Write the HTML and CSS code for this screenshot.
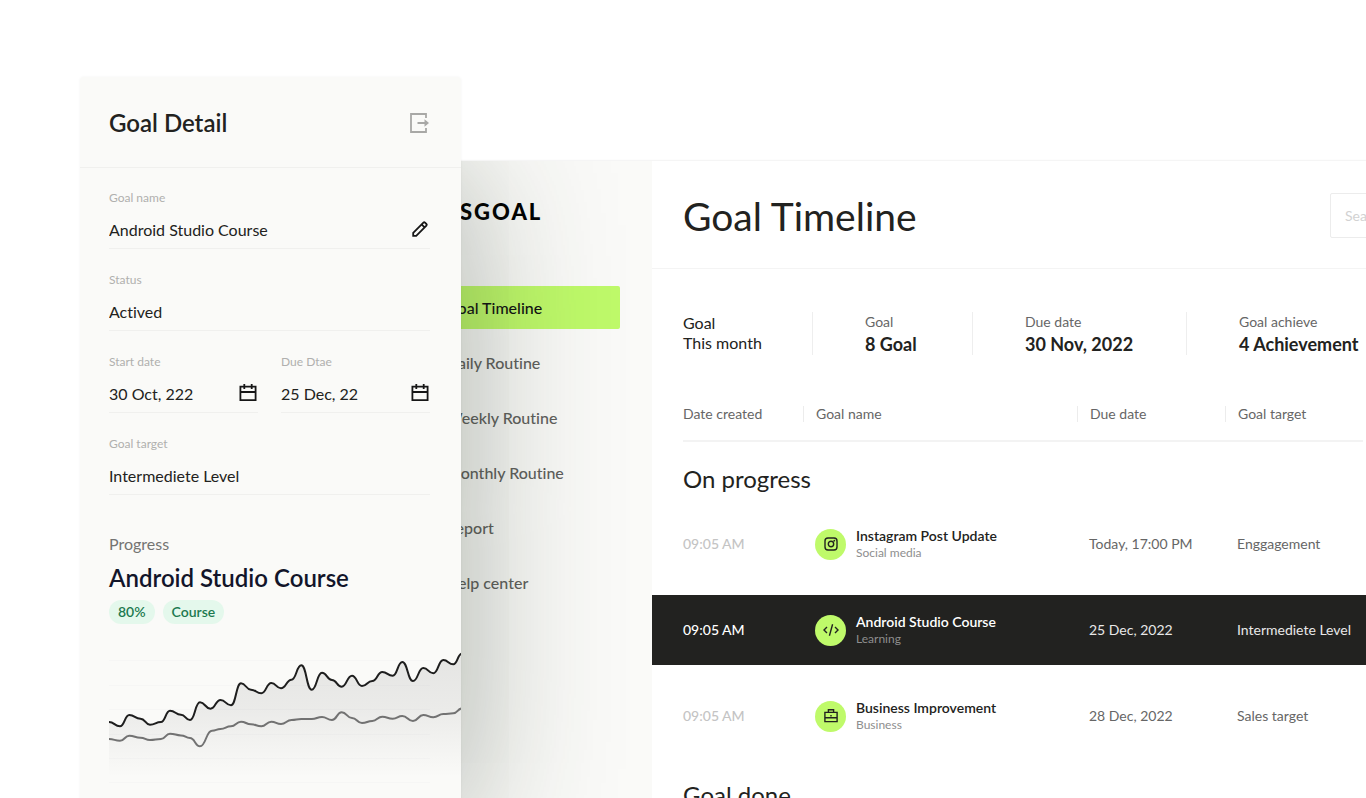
FILE: index.html
```html
<!DOCTYPE html>
<html lang="en">
<head>
<meta charset="utf-8">
<meta name="viewport" content="width=device-width, initial-scale=1">
<title>Goal Timeline</title>
<link rel="stylesheet" href="styles.css">
</head>
<body>
<div class="stage">
  <div class="app">
    <aside class="sidebar">
      <div class="logo">SGOAL</div>
      <nav class="nav">
        <a class="nav-link nav-link-active" href="#timeline">Goal Timeline</a>
        <a class="nav-link" href="#daily">Daily Routine</a>
        <a class="nav-link" href="#weekly">Weekly Routine</a>
        <a class="nav-link" href="#monthly">Monthly Routine</a>
        <a class="nav-link" href="#report">Report</a>
        <a class="nav-link" href="#help">Help center</a>
      </nav>
    </aside>
    <main class="main">
      <header class="main-head">
        <h1 class="page-title">Goal Timeline</h1>
        <input class="search" type="search" placeholder="Search" aria-label="Search">
      </header>
      <section class="stats">
        <p class="stat stat-lead">Goal<br>This month</p>
        <div class="stat"><span class="stat-label">Goal</span><strong class="stat-value">8 Goal</strong></div>
        <div class="stat"><span class="stat-label">Due date</span><strong class="stat-value">30 Nov, 2022</strong></div>
        <div class="stat"><span class="stat-label">Goal achieve</span><strong class="stat-value">4 Achievement</strong></div>
      </section>
      <table class="goals">
        <colgroup><col class="col-created"><col class="col-name"><col class="col-due"><col></colgroup>
        <thead>
          <tr>
            <th scope="col"><div class="col-head"><span>Date created</span></div></th>
            <th scope="col"><div class="col-head"><span>Goal name</span></div></th>
            <th scope="col"><div class="col-head"><span>Due date</span></div></th>
            <th scope="col"><div class="col-head"><span>Goal target</span></div></th>
          </tr>
        </thead>
        <tbody>
          <tr><th class="group" colspan="4" scope="rowgroup">On progress</th></tr>
          <tr class="goal">
            <td class="time">09:05 AM</td>
            <td>
              <div class="goal-cell">
                <span class="goal-icon">
                  <svg viewBox="0 0 16 16" width="16" height="16" aria-hidden="true"><rect x="2" y="2" width="12" height="12" rx="3"/><circle cx="8" cy="8" r="2.7"/><circle class="dot" cx="11.3" cy="4.7" r=".9"/></svg>
                </span>
                <div><div class="goal-name">Instagram Post Update</div><div class="goal-tag">Social media</div></div>
              </div>
            </td>
            <td>Today, 17:00 PM</td>
            <td>Enggagement</td>
          </tr>
          <tr class="goal goal-selected">
            <td class="time">09:05 AM</td>
            <td>
              <div class="goal-cell">
                <span class="goal-icon">
                  <svg viewBox="0 0 16 16" width="16" height="16" aria-hidden="true"><path d="M4 5 1 8l3 3M12 5l3 3-3 3M9.6 2.3 6.4 13.7"/></svg>
                </span>
                <div><div class="goal-name">Android Studio Course</div><div class="goal-tag">Learning</div></div>
              </div>
            </td>
            <td>25 Dec, 2022</td>
            <td>Intermediete Level</td>
          </tr>
          <tr class="goal">
            <td class="time">09:05 AM</td>
            <td>
              <div class="goal-cell">
                <span class="goal-icon">
                  <svg viewBox="0 0 16 16" width="16" height="16" aria-hidden="true"><path d="M1.9 4.4h12.2v9.2H1.9zM1.9 9.8h12.2M5.4 4.2V1.7h5.2v2.5M8 7v1.6"/></svg>
                </span>
                <div><div class="goal-name">Business Improvement</div><div class="goal-tag">Business</div></div>
              </div>
            </td>
            <td>28 Dec, 2022</td>
            <td>Sales target</td>
          </tr>
        </tbody>
        <tbody>
          <tr><th class="group group-next" colspan="4" scope="rowgroup">Goal done</th></tr>
        </tbody>
      </table>
    </main>
  </div>

  <section class="panel">
    <header class="panel-head">
      <h2 class="panel-title">Goal Detail</h2>
      <button class="icon-button icon-muted" type="button" aria-label="Close detail">
        <svg viewBox="0 0 20 20" width="20" height="20" aria-hidden="true"><path d="M16 5V1H1v18h15v-4M7.5 10H16"/><path class="solid" d="M14.5 6.2 19 10l-4.5 3.8z"/></svg>
      </button>
    </header>
    <form class="fields">
      <div class="field field-wide">
        <label for="goal-name">Goal name</label>
        <div class="control">
          <input id="goal-name" type="text" value="Android Studio Course">
          <button class="icon-button" type="button" aria-label="Edit goal name">
            <svg viewBox="0 0 20 20" width="20" height="20" aria-hidden="true"><path d="M3.2 15.8v-3L13.4 2.6q.8-.8 1.6 0l1.4 1.4q.8.8 0 1.6L6.2 15.8zM11.6 4.4l3 3"/></svg>
          </button>
        </div>
      </div>
      <div class="field field-wide">
        <label for="status">Status</label>
        <div class="control"><input id="status" type="text" value="Actived"></div>
      </div>
      <div class="field">
        <label for="start">Start date</label>
        <div class="control">
          <input id="start" type="text" value="30 Oct, 222">
          <button class="icon-button" type="button" aria-label="Pick start date">
            <svg viewBox="0 0 20 20" width="20" height="20" aria-hidden="true"><path d="M2.4 2.6h15.2v13.6H2.4zM2.4 8h15.2M6.3 0v5M13.7 0v5"/></svg>
          </button>
        </div>
      </div>
      <div class="field">
        <label for="due">Due Dtae</label>
        <div class="control">
          <input id="due" type="text" value="25 Dec, 22">
          <button class="icon-button" type="button" aria-label="Pick due date">
            <svg viewBox="0 0 20 20" width="20" height="20" aria-hidden="true"><path d="M2.4 2.6h15.2v13.6H2.4zM2.4 8h15.2M6.3 0v5M13.7 0v5"/></svg>
          </button>
        </div>
      </div>
      <div class="field field-wide">
        <label for="target">Goal target</label>
        <div class="control"><input id="target" type="text" value="Intermediete Level"></div>
      </div>
    </form>
    <div class="progress">
      <p class="progress-label">Progress</p>
      <h3 class="progress-title">Android Studio Course</h3>
      <div class="badges"><span class="badge">80%</span><span class="badge">Course</span></div>
      <svg class="chart" viewBox="0 0 352 148" width="352" height="148" role="img" aria-label="Course progress">
        <defs>
          <linearGradient id="fade" x1="0" y1="0" x2="0" y2="148" gradientUnits="userSpaceOnUse">
            <stop offset="0" stop-color="#222" stop-opacity=".1"/>
            <stop offset=".4" stop-color="#222" stop-opacity=".07"/>
            <stop offset=".86" stop-color="#222" stop-opacity="0"/>
          </linearGradient>
        </defs>
        <path class="chart-grid" d="M0 10.5h321M0 35.5h321M0 59.5h321M0 84.5h321M0 108.5h321M0 132.5h321"/>
        <path id="area" fill="url(#fade)"/>
        <path id="line-average" class="chart-line chart-line-soft"/>
        <path id="line-goal" class="chart-line"/>
      </svg>
    </div>
  </section>
</div>
<script src="chart.js"></script>
</body>
</html>
```

FILE: styles.css
```css
* { box-sizing: border-box; }

body {
  margin: 0;
  background: #fff;
  color: #222220;
  font-family: Lato, "Open Sans", sans-serif;
  font-size: 16px;
  font-variant-ligatures: none;
  line-height: 20px;
}

h1, h2, h3, p { margin: 0; }
input, button { font: inherit; color: inherit; }

.stage {
  position: relative;
  height: 100vh;
  padding: 161px 0 0 400px;
  overflow: hidden;
}

/* The board runs past the right edge of the stage. */
.app {
  position: relative;
  display: flex;
  width: calc(100% + 224px);
  min-height: 100%;
  overflow: hidden;
  box-shadow: 0 0 2px rgba(0, 0, 0, .12);
}

.sidebar {
  position: relative;
  flex: none;
  width: 252px;
  padding: 36px 32px;
  background: #fafaf8;
}

/* Shade that the detail panel casts on the sidebar. */
.sidebar::after {
  content: "";
  position: absolute;
  top: 12px;
  bottom: 0;
  left: -240px;
  width: 301px;
  box-shadow: 0 0 150px rgba(40, 56, 36, .42);
  pointer-events: none;
}

.logo {
  padding-left: 28px;
  color: #000;
  font-size: 22px;
  font-weight: 900;
  letter-spacing: 2px;
  line-height: 30px;
}

.nav {
  display: flex;
  flex-direction: column;
  gap: 12px;
  margin-top: 59px;
}

.nav-link {
  padding: 12px 14px 11px;
  border-radius: 2px;
  color: #60605d;
  font-weight: 500;
  text-decoration: none;
}

.nav-link-active { background: #bffa6a; color: #111; }

.main { flex: 1; background: #fff; }

.main-head {
  display: flex;
  align-items: center;
  justify-content: space-between;
  height: 108px;
  padding: 2px 32px 0 31px;
  border-bottom: 1px solid #f4f4f4;
}

.page-title { font-size: 39px; font-weight: 400; line-height: 48px; }

.search {
  width: 228px;
  height: 45px;
  padding: 0 14px;
  border: 1px solid #ececec;
  border-radius: 2px;
  background: #fff;
  font-size: 14px;
}

.search::placeholder { color: #d2d2d2; opacity: 1; }

.stats {
  display: grid;
  grid-template-columns: 129px 160px 214px auto;
  padding: 43px 0 43px 31px;
}

.stat {
  display: flex;
  flex-direction: column;
  height: 43px;
  padding-left: 52px;
  border-left: 1px solid #eee;
}

.stat-lead { display: block; padding: 1px 0 0; border: 0; }
.stat-label { color: #666; font-size: 14px; }
.stat-value { font-size: 18px; line-height: 24px; }

.goals {
  width: 100%;
  border-spacing: 0 16px;
  margin-top: -16px;
  table-layout: fixed;
  color: #666;
  font-size: 14px;
  text-align: left;
}

.col-created { width: 151px; }
.col-name { width: 274px; }
.col-due { width: 148px; }

.goals th, .goals td { padding: 0; font-weight: 400; }

.col-head { padding: 8px 0 18px; border-bottom: 2px solid #f3f3f3; }
.col-head span {
  display: block;
  padding-left: 12px;
  border-left: 1px solid #ececec;
  line-height: 16px;
}
.goals th:first-child .col-head { margin-left: 31px; }
.goals th:first-child span { padding-left: 0; border: 0; }
.goals th:last-child .col-head { margin-right: 227px; }

.goals .group {
  height: 35px;
  padding: 7px 0 0 31px;
  color: #222220;
  font-size: 24px;
  line-height: 28px;
}
.goals .group-next { padding-top: 14px; }

.goals .goal td { height: 70px; padding-left: 12px; }
.goals .goal .time { padding-left: 31px; color: #c4c4c4; font-weight: 500; }

.goal-cell { display: flex; align-items: center; gap: 10px; }
.goal-icon {
  display: grid;
  place-items: center;
  width: 31px;
  height: 31px;
  border-radius: 50%;
  background: #bffa6a;
}
.goal-icon svg { fill: none; stroke: #222220; stroke-width: 1.4; }
.goal-icon .dot { fill: #222220; stroke: none; }
.goal-name { color: #222220; font-weight: 600; line-height: 18px; }
.goal-tag { color: #8e8e8e; font-size: 12px; line-height: 16px; }

.goals .goal-selected { background: #222220; color: #e8e8e8; }
.goals .goal-selected .time, .goal-selected .goal-name { color: #fff; }

.panel {
  position: absolute;
  top: 77px;
  left: 80px;
  width: 381px;
  height: 100%;
  border-radius: 4px;
  background: #fafaf8;
  box-shadow: 0 0 3px rgba(0, 0, 0, .05);
}

.panel-head {
  display: flex;
  align-items: center;
  justify-content: space-between;
  height: 91px;
  padding: 2px 31px 0 29px;
  border-bottom: 1px solid #f0f0ee;
}

.panel-title { font-size: 24px; font-weight: 600; line-height: 30px; }

.icon-button {
  display: grid;
  place-items: center;
  flex: none;
  width: 20px;
  height: 20px;
  padding: 0;
  border: 0;
  background: none;
}
.icon-button svg { fill: none; stroke: #171717; stroke-width: 1.8; }
.icon-muted svg { stroke: #a8a8a6; }
.icon-muted .solid { fill: #a8a8a6; stroke: none; }

.fields {
  display: grid;
  grid-template-columns: 1fr 1fr;
  gap: 23px;
  padding: 22px 31px 0 29px;
}

.field { min-width: 0; border-bottom: 1px solid #f0f0ee; }
.field-wide { grid-column: span 2; }
.field label { display: block; color: #b0b0ae; font-size: 12px; line-height: 16px; }

.control { display: flex; align-items: center; height: 42px; padding-top: 6px; }
.control input {
  flex: 1;
  width: 100%;
  min-width: 0;
  padding: 0;
  border: 0;
  background: none;
  outline: 0;
}

.progress { padding: 39px 0 0 29px; }
.progress-label { color: #747472; }
.progress-title {
  margin-top: 9px;
  color: #12152a;
  font-size: 24px;
  font-weight: 600;
  line-height: 30px;
}
.badges { display: flex; gap: 8px; margin-top: 7px; }
.badge {
  padding: 2px 9px;
  border-radius: 12px;
  background: #e4f8ec;
  color: #1c7a50;
  font-size: 14px;
  font-weight: 600;
}

.chart { display: block; margin-top: 26px; }
.chart-grid { fill: none; stroke: #f6f6f5; }
.chart-line { fill: none; stroke: #1e1e1e; stroke-width: 2; }
.chart-line-soft { stroke: #727272; }
```

FILE: chart.js
```js
const goal = [
  [0, 72], [11, 76.3], [20.3, 65], [31.5, 68.7], [41, 74.7], [52, 72], [61, 60.7], [72, 64.7],
  [81, 70], [91, 52.3], [101.5, 58.7], [111.5, 50], [122, 55.3], [132, 33.3], [142, 39.7],
  [152.3, 43.3], [162.3, 33], [172, 38.3], [182.5, 29.7], [192.3, 15.3], [202.7, 39.7],
  [213, 22.7], [223, 30], [232.7, 36.7], [243, 25.7], [253, 36], [263.3, 31], [273.3, 22],
  [283.7, 25.7], [293.3, 12], [304, 31], [314.3, 18], [324.3, 23.3], [334.3, 10], [344.3, 14.3], [353, 3.5]
];

const average = [
  [0, 89], [11, 90.7], [20.3, 85.7], [31.5, 87.7], [41, 90], [52, 89], [61, 83.7], [72, 85.4],
  [81, 88], [91, 96.3], [103, 80.7], [111.5, 79], [122, 76.3], [132, 71.7], [142, 74.3],
  [152.3, 76.3], [162.3, 71.7], [172, 74], [182.5, 70], [192.3, 69], [202.7, 69], [213, 67],
  [223, 70], [232.7, 62.3], [243, 68], [253, 73], [263.3, 71], [273.3, 66.7], [283.7, 68.7],
  [293.3, 66], [304, 71], [314.3, 65], [324.3, 67.3], [334.3, 64], [344.3, 63.3], [353, 58.5]
];

function curve(points) {
  return points.reduce((d, [x, y], i) => {
    if (i === 0) return `M${x} ${y}`;
    const [px, py] = points[i - 1];
    const mid = (px + x) / 2;
    return `${d}C${mid} ${py} ${mid} ${y} ${x} ${y}`;
  }, "");
}

document.getElementById("line-goal").setAttribute("d", curve(goal));
document.getElementById("line-average").setAttribute("d", curve(average));
document.getElementById("area").setAttribute("d", `${curve(goal)}V148H0Z`);
```
